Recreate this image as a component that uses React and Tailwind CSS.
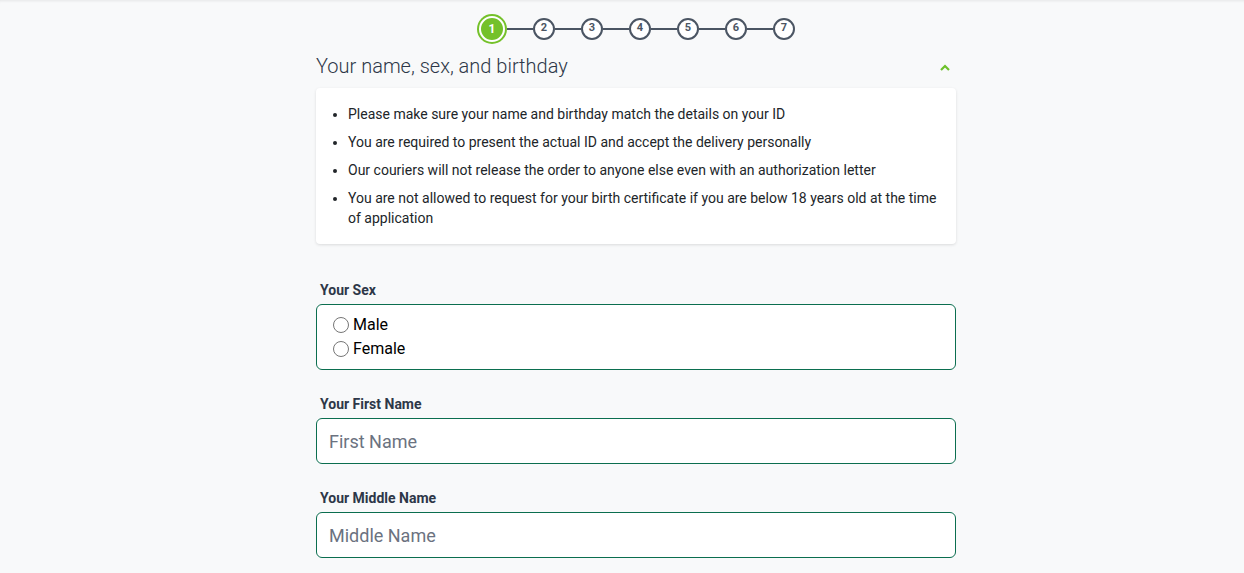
import React from "react";

const font = { fontFamily: "Roboto, 'Liberation Sans', sans-serif" };

function Stepper() {
  const steps = [2, 3, 4, 5, 6, 7];
  return (
    <div className="flex items-center justify-center pt-[13px] h-[44px]">
      <div className="w-[30px] h-[30px] rounded-full bg-[#74c12a] flex items-center justify-center">
        <div className="w-[26px] h-[26px] rounded-full border-2 border-white flex items-center justify-center text-white text-[12px] font-bold">
          1
        </div>
      </div>
      {steps.map((s) => (
        <React.Fragment key={s}>
          <div className="w-[26px] h-[2px] bg-[#4b5563]" />
          <div className="w-[22px] h-[22px] rounded-full border-2 border-[#4b5563] bg-white flex items-center justify-center text-[#4b5563] text-[11px] font-bold">
            {s}
          </div>
        </React.Fragment>
      ))}
    </div>
  );
}

export default function App() {
  return (
    <div style={font} className="min-h-[573px] bg-[#f8f9fa] shadow-[inset_0_3px_3px_-2px_rgba(0,0,0,0.08)]">
      <div className="ml-[316px] w-[640px]">
        <Stepper />
        <div className="mt-[8px] flex items-center justify-between h-[28px]">
          <h2 className="text-[20px] font-light text-[#2d3748] leading-[28px]">
            Your name, sex, and birthday
          </h2>
          <svg width="12" height="8" viewBox="0 0 12 8" className="mr-[5px] mt-[4px]">
            <path d="M2 6 L6 2 L10 6" stroke="#6cc12a" strokeWidth="2.2" fill="none" />
          </svg>
        </div>
        <div className="mt-[8px] bg-white rounded-[4px] shadow-[0_1px_3px_rgba(0,0,0,0.12)] py-[16px] pl-[32px] pr-[16px]">
          <ul className="list-disc text-[14px] leading-[20px] text-[#212529] flex flex-col gap-[8px] pl-[0px] ml-[0px]">
            <li>Please make sure your name and birthday match the details on your ID</li>
            <li>You are required to present the actual ID and accept the delivery personally</li>
            <li>Our couriers will not release the order to anyone else even with an authorization letter</li>
            <li>
              You are not allowed to request for your birth certificate if you are below 18 years old at the time of
              application
            </li>
          </ul>
        </div>

        <div className="mt-[36px]">
          <div className="pl-[4px] text-[14px] leading-[20px] font-bold text-[#2d3748]">Your Sex</div>
          <div className="mt-[4px] bg-white border border-[#0b6e4f] rounded-[6px] py-[8px] pl-[16px]">
            <label className="flex items-center h-[24px] text-[16px] text-black">
              <span className="w-[16px] h-[16px] rounded-full border border-[#767676] bg-white mr-[4px]" />
              Male
            </label>
            <label className="flex items-center h-[24px] text-[16px] text-black">
              <span className="w-[16px] h-[16px] rounded-full border border-[#767676] bg-white mr-[4px]" />
              Female
            </label>
          </div>
        </div>

        <div className="mt-[24px]">
          <div className="pl-[4px] text-[14px] leading-[20px] font-bold text-[#2d3748]">Your First Name</div>
          <input
            placeholder="First Name"
            style={font}
            className="mt-[4px] w-full h-[46px] bg-white border border-[#0b6e4f] rounded-[6px] px-[12px] text-[18px] text-black placeholder:text-[#6b7280] outline-none"
          />
        </div>

        <div className="mt-[24px]">
          <div className="pl-[4px] text-[14px] leading-[20px] font-bold text-[#2d3748]">Your Middle Name</div>
          <input
            placeholder="Middle Name"
            style={font}
            className="mt-[4px] w-full h-[46px] bg-white border border-[#0b6e4f] rounded-[6px] px-[12px] text-[18px] text-black placeholder:text-[#6b7280] outline-none"
          />
        </div>
      </div>
    </div>
  );
}
